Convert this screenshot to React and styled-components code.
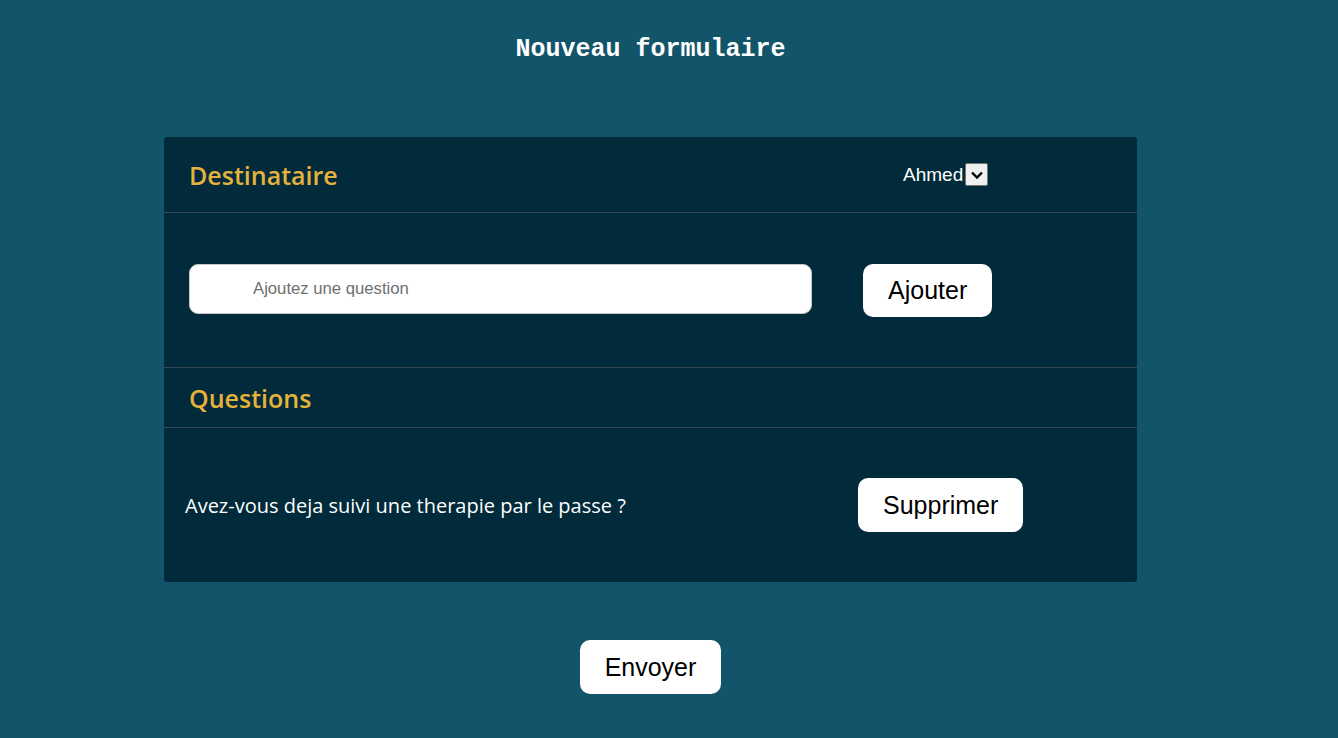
import React from "react";
import styled, { createGlobalStyle } from "styled-components";

const GlobalStyle = createGlobalStyle`
  html, body {
    margin: 0;
    padding: 0;
    background: #12556a;
  }
  body {
    font-family: "Liberation Sans", Arial, sans-serif;
  }
`;

const Page = styled.main`
  min-height: 738px;
  box-sizing: border-box;
  padding: 36px 37px 40px 0;
  display: flex;
  flex-direction: column;
  align-items: center;
`;

const Title = styled.h1`
  margin: 0;
  font-family: "Liberation Mono", "Courier New", monospace;
  font-weight: 700;
  font-size: 25px;
  line-height: 28px;
  color: #ffffff;
`;

const Card = styled.section`
  width: 973px;
  margin-top: 73px;
  background: #012a3a;
  border-radius: 3px;
  overflow: hidden;
`;

const Row = styled.div`
  display: flex;
  align-items: center;
  height: ${(p) => p.$h}px;
  padding-left: ${(p) => p.$pl || 25}px;
  border-bottom: ${(p) => (p.$last ? "none" : "1px solid #36484f")};
`;

const Heading = styled.h2`
  margin: 0;
  font-family: "Open Sans", "Noto Sans", sans-serif;
  font-weight: 600;
  font-size: 25px;
  color: #e5b23c;
  width: ${(p) => p.$w || "auto"};
`;

const Picker = styled.div`
  display: flex;
  align-items: center;
  gap: 2px;
  color: #ffffff;
  font-size: 19px;
`;

const ArrowBox = styled.span`
  width: 21px;
  height: 21px;
  display: flex;
  align-items: center;
  justify-content: center;
  background: #f0f0f0;
  border: 1px solid #767676;
  border-radius: 2px;
`;

const Input = styled.input`
  width: 623px;
  height: 50px;
  box-sizing: border-box;
  margin-top: -2px;
  border: 1px solid #c9c9c9;
  border-radius: 9px;
  padding-left: 63px;
  font-family: "Liberation Sans", Arial, sans-serif;
  font-size: 16.7px;
  color: #333;
  outline: none;
  &::placeholder {
    color: #6f6f6f;
  }
`;

const Button = styled.button`
  margin-left: ${(p) => p.$ml || 0}px;
  padding: 12px 25px;
  background: #ffffff;
  border: none;
  border-radius: 10px;
  font-family: "Liberation Sans", Arial, sans-serif;
  font-size: 25px;
  line-height: ${(p) => p.$lh || 29}px;
  color: #000;
  cursor: pointer;
`;

const QuestionText = styled.p`
  margin: 0;
  width: 673px;
  font-family: "Open Sans", "Noto Sans", sans-serif;
  font-size: 20px;
  color: #ffffff;
`;

const Footer = styled.div`
  margin-top: 58px;
`;

export default function App() {
  return (
    <>
      <GlobalStyle />
      <Page>
        <Title>Nouveau formulaire</Title>
        <Card>
          <Row $h={75}>
            <Heading $w="714px">Destinataire</Heading>
            <Picker>
              Ahmed
              <ArrowBox>
                <svg width="14" height="10" viewBox="0 0 14 10">
                  <path d="M2 2.5 L7 7.5 L12 2.5" fill="none" stroke="#000" strokeWidth="2.4" />
                </svg>
              </ArrowBox>
            </Picker>
          </Row>
          <Row $h={154} $pl={25}>
            <Input placeholder="Ajoutez une question" />
            <Button $ml={51}>Ajouter</Button>
          </Row>
          <Row $h={59}>
            <Heading>Questions</Heading>
          </Row>
          <Row $h={154} $pl={21} $last>
            <QuestionText>Avez-vous deja suivi une therapie par le passe ?</QuestionText>
            <Button $lh={30}>Supprimer</Button>
          </Row>
        </Card>
        <Footer>
          <Button $lh={30}>Envoyer</Button>
        </Footer>
      </Page>
    </>
  );
}
